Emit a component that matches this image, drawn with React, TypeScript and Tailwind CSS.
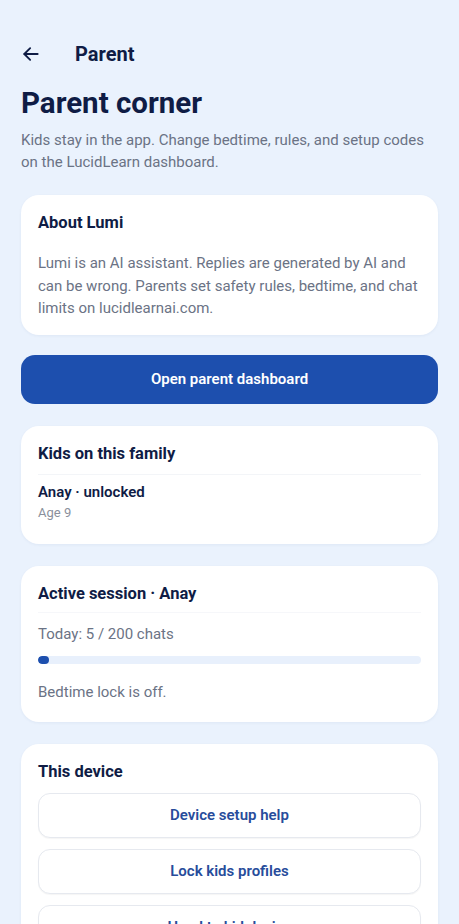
import React from 'react';

const navy = 'text-[#0f1c45]';

const Card: React.FC<{ className?: string; children: React.ReactNode }> = ({ className = '', children }) => (
  <div className={`bg-white rounded-[18px] px-[17px] shadow-[0_1px_3px_rgba(30,60,120,0.06)] ${className}`}>{children}</div>
);

const OutlineButton: React.FC<{ label: string }> = ({ label }) => (
  <button
    type="button"
    className="w-full h-[45px] rounded-[12px] border border-[#e6e9ef] bg-white text-[15px] font-semibold text-[#274c9b] shadow-[0_1px_1px_rgba(0,0,0,0.04)]"
  >
    {label}
  </button>
);

export default function App() {
  const used = 5;
  const limit = 200;
  const pct = Math.max((used / limit) * 100, 3);

  return (
    <div
      className="min-h-[924px] w-full bg-[#eaf2fd] px-[21px] overflow-hidden"
      style={{ fontFamily: 'Roboto, "Noto Sans", sans-serif' }}
    >
      <div className="flex items-center h-12 mt-[30px]">
        <button type="button" className={`w-[20px] flex items-center ${navy}`}>
          <svg width="20" height="20" viewBox="0 0 24 24" fill="none" stroke="currentColor" strokeWidth="2.2" strokeLinecap="round" strokeLinejoin="round">
            <path d="M20 12H4" />
            <path d="M11 5l-7 7 7 7" />
          </svg>
        </button>
        <span className={`ml-[34px] text-[20px] font-bold ${navy}`}>Parent</span>
      </div>

      <h1 className={`mt-[8px] text-[29.5px] leading-[34px] font-bold ${navy}`}>Parent corner</h1>
      <p className="mt-[9px] text-[15px] leading-[22px] text-[#6b7385]">
        Kids stay in the app. Change bedtime, rules, and setup codes on the LucidLearn dashboard.
      </p>

      <Card className="mt-[22px] pt-[17px] pb-[15px]">
        <h2 className={`text-[16.5px] leading-[22px] font-bold ${navy}`}>About Lumi</h2>
        <p className="mt-[18px] text-[15px] leading-[22.5px] text-[#6b7385]">
          Lumi is an AI assistant. Replies are generated by AI and can be wrong. Parents set safety rules, bedtime, and chat limits on lucidlearnai.com.
        </p>
      </Card>

      <button
        type="button"
        className="mt-[20px] w-full h-[49px] rounded-[14px] bg-[#1d4fae] text-white text-[15px] font-semibold"
      >
        Open parent dashboard
      </button>

      <Card className="mt-[22px] pt-[17px] pb-[22px]">
        <h2 className={`text-[16.5px] leading-[22px] font-bold ${navy} pb-[9px] border-b border-[#f3f5f8]`}>Kids on this family</h2>
        <div className="pt-[7px]">
          <div className={`text-[15px] leading-[20px] font-semibold ${navy}`}>Anay · unlocked</div>
          <div className="mt-[2px] text-[13px] leading-[18px] text-[#8a909c]">Age 9</div>
        </div>
      </Card>

      <Card className="mt-[22px] pt-[17px] pb-[19px]">
        <h2 className={`text-[16.5px] leading-[22px] font-bold ${navy} pb-[7px] border-b border-[#f6f7fa]`}>Active session · Anay</h2>
        <p className="mt-[10px] text-[15px] leading-[22px] text-[#6b7385]">Today: {used} / {limit} chats</p>
        <div className="mt-[11px] h-[8px] w-full rounded-full bg-[#e8f0fc] overflow-hidden">
          <div className="h-full rounded-full bg-[#1d4fae]" style={{ width: `${pct}%` }} />
        </div>
        <p className="mt-[17px] text-[15px] leading-[22px] text-[#6b7385]">Bedtime lock is off.</p>
      </Card>

      <Card className="mt-[22px] pt-[17px] pb-[17px]">
        <h2 className={`text-[16.5px] leading-[22px] font-bold ${navy}`}>This device</h2>
        <div className="mt-[10px] flex flex-col gap-[11px]">
          <OutlineButton label="Device setup help" />
          <OutlineButton label="Lock kids profiles" />
          <OutlineButton label="Hand to kid device" />
        </div>
      </Card>
    </div>
  );
}
